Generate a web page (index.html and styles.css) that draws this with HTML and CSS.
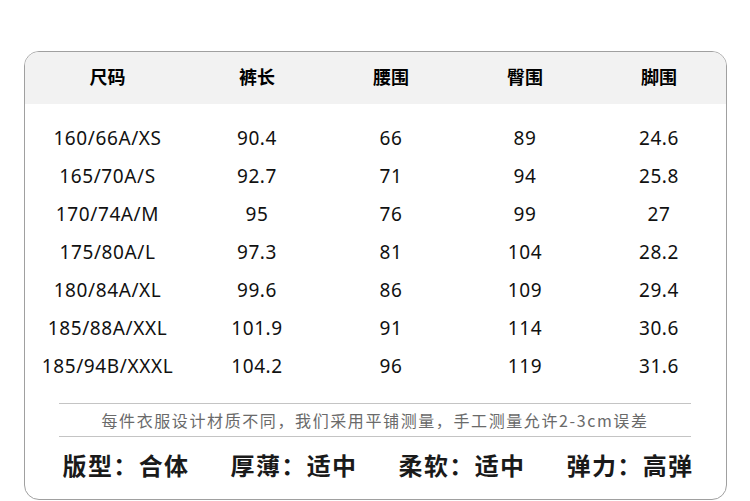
FILE: index.html
```
<!DOCTYPE html>
<html lang="zh">
<head>
<meta charset="utf-8">
<link rel="stylesheet" href="styles.css">
</head>
<body>
<div class="card">
  <div class="row head">
    <div>尺码</div><div>裤长</div><div>腰围</div><div>臀围</div><div>脚围</div>
  </div>
  <div class="rows">
    <div class="row"><div>160/66A/XS</div><div>90.4</div><div>66</div><div>89</div><div>24.6</div></div>
    <div class="row"><div>165/70A/S</div><div>92.7</div><div>71</div><div>94</div><div>25.8</div></div>
    <div class="row"><div>170/74A/M</div><div>95</div><div>76</div><div>99</div><div>27</div></div>
    <div class="row"><div>175/80A/L</div><div>97.3</div><div>81</div><div>104</div><div>28.2</div></div>
    <div class="row"><div>180/84A/XL</div><div>99.6</div><div>86</div><div>109</div><div>29.4</div></div>
    <div class="row"><div>185/88A/XXL</div><div>101.9</div><div>91</div><div>114</div><div>30.6</div></div>
    <div class="row"><div>185/94B/XXXL</div><div>104.2</div><div>96</div><div>119</div><div>31.6</div></div>
  </div>
  <div class="note">每件衣服设计材质不同，我们采用平铺测量，手工测量允许2-3cm误差</div>
  <div class="props">
    <span>版型：合体</span><span>厚薄：适中</span><span>柔软：适中</span><span>弹力：高弹</span>
  </div>
</div>
</body>
</html>
```
FILE: styles.css
```
html, body {
  margin: 0;
  padding: 0;
  background: #fff;
}
body {
  padding-top: 51px;
  font-family: "Noto Sans", "Noto Sans CJK SC", sans-serif;
  color: #111;
}
.card {
  margin-left: 24px;
  width: 701px;
  height: 447px;
  border: 1px solid #a0a0a0;
  border-radius: 15px;
  overflow: hidden;
}
.row {
  display: grid;
  grid-template-columns: 165px 134px 134px 134px 134px;
  height: 38px;
  align-items: center;
  text-align: center;
  font-size: 19px;
  letter-spacing: 0.6px;
}
.head {
  height: 48px;
  padding-bottom: 4px;
  background: #f2f2f2;
  font-family: "Noto Sans CJK SC", sans-serif;
  font-weight: bold;
  font-size: 18px;
  color: #000;
  letter-spacing: 0;
}
.rows {
  padding-top: 15px;
}
.note {
  margin: 18px 35px 0 34px;
  height: 32px;
  border-top: 1px solid #c4c4c4;
  border-bottom: 1px solid #c4c4c4;
  display: flex;
  align-items: center;
  justify-content: center;
  font-family: "Noto Sans CJK SC", sans-serif;
  font-size: 16px;
  letter-spacing: 1.6px;
  color: #6a6a6a;
}
.props {
  display: flex;
  justify-content: center;
  gap: 41px;
  padding-left: 5px;
  margin-top: 10px;
  font-family: "Noto Sans CJK SC", sans-serif;
  font-weight: bold;
  font-size: 24px;
  letter-spacing: 1.4px;
  color: #1a1a1a;
}
```
